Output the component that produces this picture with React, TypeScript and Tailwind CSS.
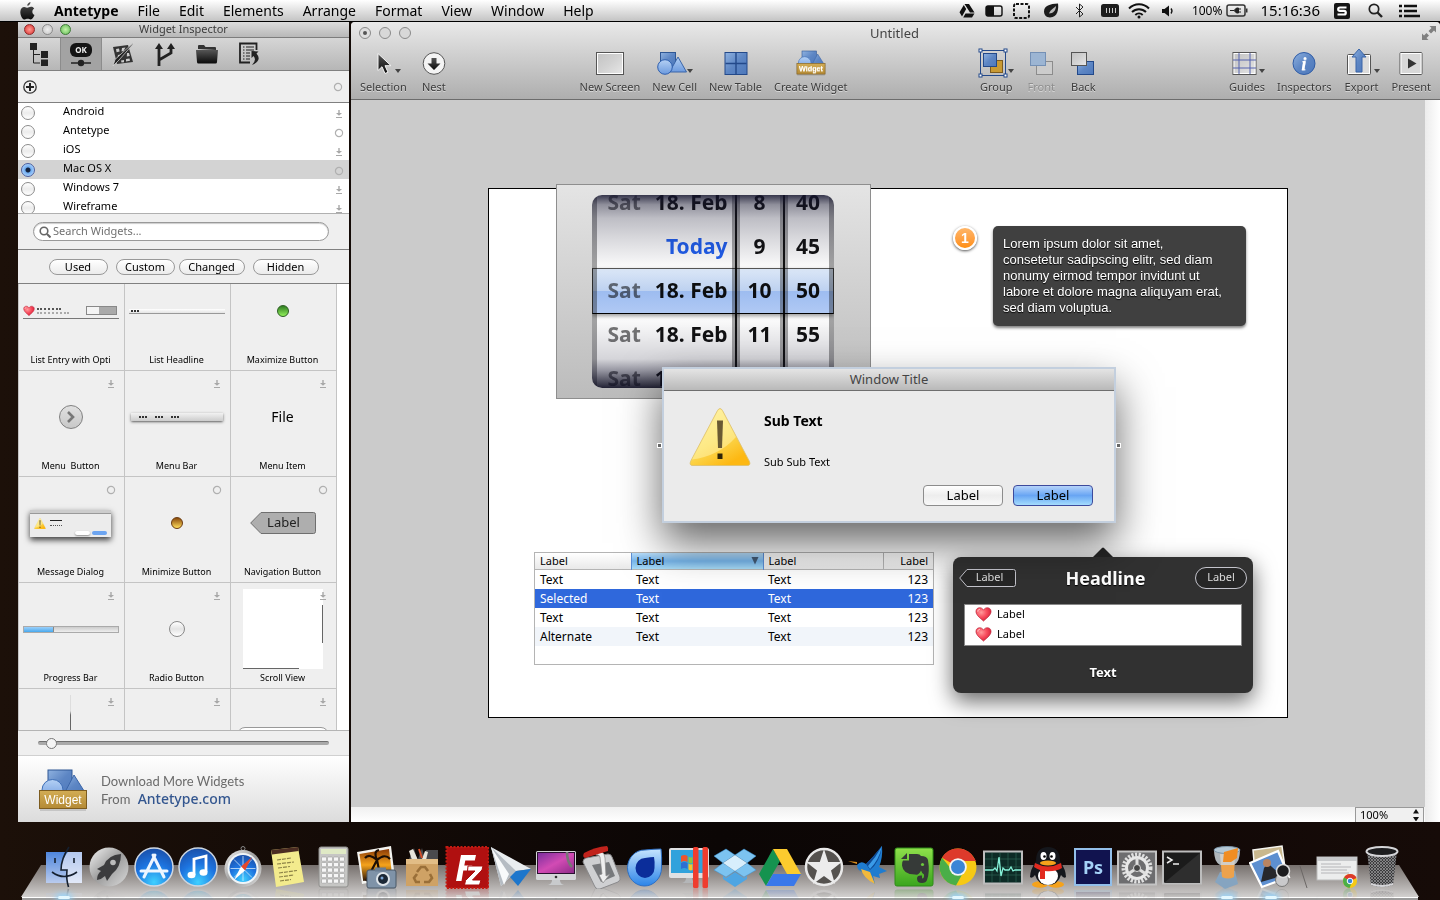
import React, { useState } from "react";

const menus = ["File", "Edit", "Elements", "Arrange", "Format", "View", "Window", "Help"];

const libraries = [
  { name: "Android", mark: "download" },
  { name: "Antetype", mark: "ring" },
  { name: "iOS", mark: "download" },
  { name: "Mac OS X", mark: "ring" },
  { name: "Windows 7", mark: "download" },
  { name: "Wireframe", mark: "download" },
];

const wheelRows = [
  { day: "Sat", date: "18. Feb", hour: "8", minute: "40" },
  { day: "", date: "Today", hour: "9", minute: "45" },
  { day: "Sat", date: "18. Feb", hour: "10", minute: "50" },
  { day: "Sat", date: "18. Feb", hour: "11", minute: "55" },
  { day: "Sat", date: "18. Feb", hour: "", minute: "" },
];

const tableRows = [
  { name: "Text", style: "" },
  { name: "Selected", style: "bg-[#2f68dc] text-white" },
  { name: "Text", style: "" },
  { name: "Alternate", style: "bg-[#f1f5fa]" },
];

/* ---------- shared drawings ---------- */

const Defs = () => (
  <svg width="0" height="0" className="absolute" aria-hidden="true">
    <defs>
      <linearGradient id="blue" x1="0" y1="0" x2="1" y2="1">
        <stop offset="0" stopColor="#8fb2e0" />
        <stop offset="0.5" stopColor="#5d86c4" />
        <stop offset="1" stopColor="#4d78bb" />
      </linearGradient>
      <linearGradient id="sky" x1="0" y1="0" x2="0" y2="1">
        <stop offset="0" stopColor="#b4d0f4" />
        <stop offset="1" stopColor="#6c9ade" />
      </linearGradient>
      <linearGradient id="gold" x1="0" y1="0" x2="0" y2="1">
        <stop offset="0" stopColor="#d3ad55" />
        <stop offset="1" stopColor="#b48a35" />
      </linearGradient>
      <linearGradient id="paper" x1="0" y1="0" x2="1" y2="1">
        <stop offset="0" stopColor="#c2c2c2" />
        <stop offset="0.5" stopColor="#d2d2d2" />
        <stop offset="1" stopColor="#e8e8e8" />
      </linearGradient>
      <linearGradient id="ink" x1="0" y1="0" x2="0" y2="1">
        <stop offset="0" stopColor="#555" />
        <stop offset="1" stopColor="#0a0a0a" />
      </linearGradient>
      <linearGradient id="steel" x1="0" y1="0" x2="1" y2="1">
        <stop offset="0" stopColor="#f4f4f4" />
        <stop offset="0.5" stopColor="#9c9c9c" />
        <stop offset="1" stopColor="#dcdcdc" />
      </linearGradient>
      <linearGradient id="warn" x1="0" y1="0" x2="0.6" y2="1">
        <stop offset="0" stopColor="#fff2a0" />
        <stop offset="0.6" stopColor="#fbdc58" />
        <stop offset="1" stopColor="#fdb813" />
      </linearGradient>
      <radialGradient id="heart" cx="0.35" cy="0.35" r="0.7">
        <stop offset="0" stopColor="#ff9a9c" />
        <stop offset="0.5" stopColor="#f85060" />
        <stop offset="1" stopColor="#d81f38" />
      </radialGradient>
      <radialGradient id="disc" cx="0.5" cy="0.9" r="0.9">
        <stop offset="0" stopColor="#3fd0ff" />
        <stop offset="0.55" stopColor="#1d74e0" />
        <stop offset="1" stopColor="#1a4fa8" />
      </radialGradient>
      <linearGradient id="finder" x1="0" y1="0" x2="0" y2="1">
        <stop offset="0" stopColor="#4f86dc" />
        <stop offset="1" stopColor="#b9cbee" />
      </linearGradient>
      <linearGradient id="finderLight" x1="0" y1="0" x2="0" y2="1">
        <stop offset="0" stopColor="#b4c8ee" />
        <stop offset="1" stopColor="#e2e9f8" />
      </linearGradient>
      <linearGradient id="sunset" x1="0" y1="0" x2="0" y2="1">
        <stop offset="0" stopColor="#8b3a06" />
        <stop offset="0.5" stopColor="#f5a31c" />
        <stop offset="1" stopColor="#2c1403" />
      </linearGradient>
      <linearGradient id="magenta" x1="0" y1="0" x2="1" y2="1">
        <stop offset="0" stopColor="#7c2f9e" />
        <stop offset="0.5" stopColor="#d24bb4" />
        <stop offset="1" stopColor="#8f2c8a" />
      </linearGradient>
      <linearGradient id="drop" x1="0" y1="0" x2="0" y2="1">
        <stop offset="0" stopColor="#c6e4ff" />
        <stop offset="1" stopColor="#2b84e8" />
      </linearGradient>
      <linearGradient id="leaf" x1="0" y1="0" x2="0" y2="1">
        <stop offset="0" stopColor="#8fe04b" />
        <stop offset="1" stopColor="#3aa51e" />
      </linearGradient>
      <pattern id="mesh" width="3" height="3" patternUnits="userSpaceOnUse">
        <rect width="3" height="3" fill="#3b3b3d" />
        <path d="M0 0L3 3M3 0L0 3" stroke="#9a9a9c" strokeWidth="0.7" />
      </pattern>
    </defs>
  </svg>
);

const Mark = ({ kind, className = "" }) =>
  kind === "ring" ? (
    <svg width="10" height="10" viewBox="0 0 10 10" className={className}>
      <circle cx="5" cy="5" r="3.600" fill="none" stroke="#b0b0b0" strokeWidth="1.200" />
    </svg>
  ) : (
    <svg width="10" height="10" viewBox="0 0 10 10" className={className}>
      <path d="M4.300 1h1.400v3H8L5 6.800 2 4h2.300zM2 8h6v1H2z" fill="#a8a8a8" />
    </svg>
  );

const Heart = ({ size }) => (
  <svg width={size} height={size} viewBox="0 0 18 18">
    <path
      d="M9 16C6.500 13.500 1 10 1 5.800 1 3 3 1.800 5 1.800c1.800 0 3.200 1 4 2.600.8-1.600 2.200-2.600 4-2.600 2 0 4 1.200 4 4C17 10 11.500 13.500 9 16z"
      fill="url(#heart)"
      stroke="#b8243a"
      strokeWidth="0.7"
    />
    <path d="M3 6c0-1.600.8-2.500 2.200-2.500" stroke="#ffd4d4" fill="none" />
  </svg>
);

const Warning = ({ className }) => (
  <svg viewBox="0 0 62 58" className={className}>
    <path
      d="M28.500 2.500q2.500-4 5 0l27 51q1.500 4-2.500 4H4q-4 0-2.500-4z"
      fill="url(#warn)"
      stroke="#dcbf6e"
      strokeWidth="0.8"
    />
    <path d="M29 3q2-3 4 0l14 26Q30 48 3 51.500z" fill="#fff6b4" opacity="0.5" />
    <path d="M28 12.500h6l-1 27.500h-4z" fill="#6a5a33" />
    <path d="M28.500 45.500h5v5.500h-5z" fill="#2f2408" />
  </svg>
);

const WidgetLogo = ({ size, id }) => (
  <svg width={size} height={size} viewBox="0 0 50 50">
    <rect x="10" y="5" width="24" height="24" fill="url(#blue)" stroke="#2f5794" />
    <path d="M36 10L48 29H26z" fill="url(#blue)" stroke="#3a65a8" />
    <circle cx="14.500" cy="25" r="10.500" fill="url(#sky)" stroke="#3f6fb6" />
    <rect x="1.500" y="25.500" width="47" height="18" fill="url(#gold)" stroke="#7d5c1f" />
    <text
      x="25"
      y="38.500"
      textAnchor="middle"
      fontFamily="Liberation Sans, sans-serif"
      fontSize="12"
      fontWeight={id === "bar" ? "bold" : "normal"}
      fill="#fff"
    >
      Widget
    </text>
    <path d="M2 45h46" stroke="#000" opacity="0.25" />
  </svg>
);

const Box = ({ children }) => (
  <svg width="30" height="30" viewBox="0 0 30 30">
    {children}
  </svg>
);

/* ---------- window tool bar ---------- */

const toolGroups = [
  [
    {
      label: "Selection",
      menu: true,
      icon: (
        <Box>
          <path d="M13 5.500v17l4-3.800 3 6.800 3-1.300-3-6.500h6z" fill="url(#ink)" stroke="#f4f4f4" />
        </Box>
      ),
    },
    {
      label: "Nest",
      icon: (
        <Box>
          <circle cx="15" cy="15.500" r="10.800" fill="#f4f4f4" stroke="#555" />
          <path d="M12.500 10h5v5.500h4L15 22l-6.500-6.500h4z" fill="url(#ink)" />
        </Box>
      ),
    },
  ],
  [
    {
      label: "New Screen",
      icon: (
        <Box>
          <rect x="1.500" y="4.500" width="27" height="22" fill="url(#paper)" stroke="#555" />
          <rect x="2.500" y="5.500" width="25" height="20" fill="none" stroke="#fff" />
        </Box>
      ),
    },
    {
      label: "New Cell",
      menu: true,
      icon: (
        <Box>
          <rect x="3.500" y="4.500" width="15" height="14" fill="url(#blue)" stroke="#2f5794" />
          <path d="M21 9l8.500 15h-17z" fill="url(#sky)" stroke="#3a65a8" />
          <circle cx="8" cy="19" r="7.300" fill="url(#sky)" stroke="#2f5fae" />
        </Box>
      ),
    },
    {
      label: "New Table",
      icon: (
        <Box>
          <rect x="4" y="4.500" width="22" height="22" fill="url(#blue)" stroke="#23498a" />
          <path d="M15 5v21M4.500 15.500h21" stroke="#23498a" strokeWidth="1.400" />
        </Box>
      ),
    },
    { label: "Create Widget", icon: <WidgetLogo size={30} id="bar" /> },
  ],
  [
    {
      label: "Group",
      menu: true,
      icon: (
        <Box>
          <rect x="2.500" y="2.500" width="25" height="25" fill="none" stroke="#23498a" />
          <rect x="12.500" y="12.500" width="12" height="12" fill="#c99a33" stroke="#7d5c1f" />
          <rect x="5.500" y="5.500" width="13" height="13" fill="url(#blue)" stroke="#23498a" />
          {[1, 26].map((x) =>
            [1, 26].map((y) => (
              <rect key={x + "-" + y} x={x} y={y} width="3" height="3" fill="#fff" stroke="#23498a" />
            ))
          )}
        </Box>
      ),
    },
    {
      label: "Front",
      disabled: true,
      icon: (
        <Box>
          <rect x="10.500" y="13.500" width="16" height="13" fill="#ccc" stroke="#8c8c8c" />
          <rect x="4.500" y="4.500" width="15" height="13" fill="#9cb5d3" stroke="#7490b5" />
        </Box>
      ),
    },
    {
      label: "Back",
      icon: (
        <Box>
          <rect x="9.500" y="13.500" width="16" height="13" fill="url(#blue)" stroke="#23498a" />
          <rect x="3.500" y="4.500" width="15" height="13" fill="url(#paper)" stroke="#555" />
        </Box>
      ),
    },
  ],
  [
    {
      label: "Guides",
      menu: true,
      icon: (
        <Box>
          <rect x="4" y="4.500" width="23" height="22" fill="url(#paper)" stroke="#555" />
          <rect x="5" y="5.500" width="21" height="20" fill="none" stroke="#fff" />
          <path d="M10 5v21M21 5v21M4 12h23M4 20h23" stroke="#5562ae" />
        </Box>
      ),
    },
    {
      label: "Inspectors",
      icon: (
        <Box>
          <circle cx="15" cy="15.500" r="11" fill="url(#blue)" stroke="#2f5ca6" />
          <text
            x="15"
            y="22"
            textAnchor="middle"
            fontFamily="Liberation Serif, serif"
            fontStyle="italic"
            fontWeight="bold"
            fontSize="19"
            fill="#fff"
          >
            i
          </text>
        </Box>
      ),
    },
    {
      label: "Export",
      menu: true,
      icon: (
        <Box>
          <rect x="3.500" y="6.500" width="23" height="20" rx="1" fill="#dcdcdc" stroke="#555" />
          <rect x="4.500" y="7.500" width="21" height="18" fill="none" stroke="#fff" />
          <path d="M15 1l7 8h-4v15h-6V9H8z" fill="url(#blue)" stroke="#3a65a8" />
        </Box>
      ),
    },
    {
      label: "Present",
      icon: (
        <Box>
          <rect x="4" y="4.500" width="22" height="22" rx="1" fill="#d8d8d8" stroke="#555" />
          <rect x="5" y="5.500" width="20" height="20" fill="none" stroke="#fff" />
          <path d="M12 10.500l8.500 5-8.500 5z" fill="#333" />
        </Box>
      ),
    },
  ],
];

const ToolButton = ({ tool }) => (
  <button
    className={`flex flex-col items-center text-[11px] leading-[18px] ${
      tool.disabled ? "text-[#8f8f8f]" : "text-[#3c3c3c]"
    } [text-shadow:0_1px_0_rgba(255,255,255,0.5)]`}
  >
    <span className="flex items-end">
      {tool.icon}
      {tool.menu && (
        <svg width="6" height="9" viewBox="0 0 6 9">
          <path d="M0 0h6L3 4z" fill="#444" />
        </svg>
      )}
    </span>
    <span>{tool.label}</span>
  </button>
);

/* ---------- menu bar ---------- */

const MenuBar = () => (
  <header className="flex h-[22px] shrink-0 items-center justify-between border-b border-black bg-linear-to-b from-white to-[#c4c4c4] pr-5 pl-5 text-sm text-black">
    <nav className="flex items-center gap-[19px]">
      <button aria-label="Apple">
        <svg width="15" height="18" viewBox="0 0 15 18">
          <path
            d="M10.500 0c.2 1.800-1.400 3.800-3.200 3.800C7 2.200 8.700.3 10.500 0zM14.500 13c-.8 2-2.200 4.500-3.800 4.500-1.200 0-1.600-.7-3-.7s-1.900.7-3 .7C2.500 17.500.3 13.500.3 9.900c0-3.300 2-5 4-5 1.300 0 2.400.8 3.200.8.800 0 2-.9 3.500-.9 1 0 2.400.4 3.200 1.700-2.700 1.700-2.300 5.500.3 6.500z"
            fill="url(#ink)"
          />
        </svg>
      </button>
      <button className="font-bold">Antetype</button>
      {menus.map((m) => (
        <button key={m}>{m}</button>
      ))}
    </nav>
    <div className="flex items-center gap-3">
      <svg width="16" height="14" viewBox="0 0 16 14">
        <path d="M5.500 0h4.500l5.500 8.500H11zM4.800 1l2.400 4L3 12.500.5 8.300zM6.500 9.500h9L13 13.500H4.200z" fill="#111" />
      </svg>
      <svg width="18" height="12" viewBox="0 0 18 12" className="-ml-0.5">
        <rect x="1" y="1" width="16" height="10" rx="2" fill="none" stroke="#111" strokeWidth="1.400" />
        <path d="M1 1h8v10H1z" fill="#111" />
      </svg>
      <svg width="18" height="16" viewBox="0 0 18 16" className="-ml-0.5">
        <rect x="1" y="1" width="15" height="14" rx="2" fill="none" stroke="#111" strokeWidth="2" strokeDasharray="3 1.500" />
      </svg>
      <svg width="16" height="15" viewBox="0 0 16 15">
        <path d="M15 .5c.8 5-.2 14-8 14C3 14.500 1 11.500 1 8.500c0-6 6-7.500 14-8z" fill="#1c1c1c" />
        <path d="M13 3c0 4-2.500 7.500-7 7.500C8 6 10 6 13 3z" fill="#bbb" />
      </svg>
      <svg width="10" height="15" viewBox="0 0 10 15" className="ml-1">
        <path d="M1 4l7 7-3.500 3V1L8 4l-7 7" fill="none" stroke="#222" />
      </svg>
      <svg width="19" height="13" viewBox="0 0 19 13" className="ml-1">
        <rect x="0" y="0" width="18" height="13" rx="2.500" fill="#1c1c1c" />
        <path d="M5.500 4v5M8.500 4v5M11.500 4v5M14.500 4v5" stroke="#ccc" />
      </svg>
      <svg width="22" height="16" viewBox="0 0 22 16" className="-ml-1">
        <path d="M1 5.500a14 14 0 0120 0M4 9a10 10 0 0114 0M7.300 12a5.500 5.500 0 017.400 0" fill="none" stroke="#111" strokeWidth="2" />
        <circle cx="11" cy="14" r="1.500" fill="#111" />
      </svg>
      <svg width="12" height="12" viewBox="0 0 12 12">
        <path d="M0 4h2.500L7 .5v11L2.500 8H0z" fill="#111" />
        <path d="M9 3.500q2 2.500 0 5" fill="none" stroke="#111" strokeWidth="1.300" />
      </svg>
      <span className="ml-1.5 flex items-center gap-1 text-xs">
        <span>100%</span>
        <svg width="22" height="13" viewBox="0 0 22 13">
          <rect x="1" y="1" width="18" height="11" rx="2" fill="none" stroke="#333" strokeWidth="1.500" />
          <path d="M20 4.500h1.500v4H20z" fill="#333" />
          <path d="M4 6.500h4M8 6.500l2.500-2.500h2v5h-2zM12 5h3M12 8h3" stroke="#222" fill="#222" />
        </svg>
      </span>
      <span className="mr-0.5 text-[15px]">15:16:36</span>
      <svg width="16" height="16" viewBox="0 0 16 16">
        <rect width="16" height="16" rx="2" fill="#161616" />
        <path d="M12.500 4.500H6q-1.800 0-1.800 1.700T6 7.900h4q1.800 0 1.800 1.800T10 11.500H3.500" fill="none" stroke="#fff" strokeWidth="2.200" />
      </svg>
      <svg width="15" height="15" viewBox="0 0 15 15" className="ml-1.5">
        <circle cx="6" cy="6" r="4.700" fill="none" stroke="#222" strokeWidth="1.700" />
        <path d="M9.500 9.500L14 14" stroke="#222" strokeWidth="2.400" />
      </svg>
      <svg width="21" height="14" viewBox="0 0 21 14" className="ml-1">
        <path d="M0 2h3M5 2h13M0 7h3M5 7h13M0 12h3M5 12h16" stroke="#111" strokeWidth="2.400" />
      </svg>
    </div>
  </header>
);

/* ---------- widget inspector ---------- */

const tabs = [
  {
    name: "Elements",
    icon: (
      <svg width="24" height="26" viewBox="0 0 24 26">
        <path d="M3 2h7v7H3zM14 10h7v7h-7zM14 18.500h7V25h-7z" fill="#222" />
        <path d="M6.500 9v13H13M6.500 13.500H13" stroke="#222" fill="none" />
      </svg>
    ),
  },
  {
    name: "Widgets",
    icon: (
      <svg width="24" height="26" viewBox="0 0 24 26">
        <rect x="1" y="2" width="22" height="14" rx="6" fill="#141414" />
        <text x="12" y="12" textAnchor="middle" fontFamily="Noto Sans, sans-serif" fontWeight="bold" fontSize="8" fill="#eee">
          OK
        </text>
        <path d="M2 22h20M9.500 22a2.500 2.500 0 005 0 2.500 2.500 0 00-5 0" stroke="#222" strokeWidth="1.400" fill="#222" />
      </svg>
    ),
  },
  {
    name: "Styles",
    icon: (
      <svg width="24" height="26" viewBox="0 0 24 26">
        <path d="M2 6l15-2 5 17-16 2z" fill="#333" />
        <path d="M5 8l3-.4.6 3-3 .6zM11 7l3.500-.4-2 3.400-2 .4zM7 14l2.500-.5-3 4zM16 12l2 .1.800 3-3 .5zM15 18l3.500-.4.5 2.200-4 .6zM10 19.500l3-.5v2.200l-2.500.3z" fill="#ccc" />
        <path d="M23 2L8 19l-6 6 2-6.500L21 3z" fill="#222" stroke="#ddd" strokeWidth="0.700" />
      </svg>
    ),
  },
  {
    name: "States",
    icon: (
      <svg width="24" height="26" viewBox="0 0 24 26">
        <path d="M6 25V6M6 19l12-7V6" stroke="#222" strokeWidth="2.800" fill="none" />
        <path d="M2 8l4-6 4 6zM14 8l4-6 4 6z" fill="#222" />
      </svg>
    ),
  },
  {
    name: "Assets",
    icon: (
      <svg width="24" height="26" viewBox="0 0 24 26">
        <path d="M3 8V5q0-1 1-1h5l1.500 2H20q1 0 1 1v2z" fill="#333" />
        <path d="M1 9h22l-1 12q0 1.500-1.500 1.500h-17Q2 22.500 2 21z" fill="url(#ink)" />
      </svg>
    ),
  },
  {
    name: "Notes",
    icon: (
      <svg width="24" height="26" viewBox="0 0 24 26">
        <path d="M19.500 9V2.500H3v19h10" fill="none" stroke="#222" strokeWidth="1.800" />
        <path d="M6 6h1.500M9 6h8M6 9h1.500M9 9h8M6 12h1.500M9 12h4M6 15h1.500M9 15h4M6 18h1.500M9 18h4" stroke="#222" />
        <path d="M14.500 10l7 .5-2 2q6 7-4.500 11.500 5-5 1.500-9l-2 2z" fill="#222" />
      </svg>
    ),
  },
];

const widgets = [
  {
    name: "List Entry with Opti",
    preview: (
      <div className="flex h-4 w-24 items-center border-b border-[#777]">
        <Heart size={12} />
        <div className="ml-0.5 flex flex-col gap-0.5">
          <div className="w-6 border-t-2 border-dotted border-[#555]"></div>
          <div className="w-8 border-t-2 border-dotted border-[#aaa]"></div>
        </div>
        <div className="mr-0.5 ml-auto flex h-[9px] w-[31px] border border-[#888] bg-[#aaa]">
          <div className="w-3 bg-[#f4f4f4]"></div>
        </div>
      </div>
    ),
  },
  {
    name: "List Headline",
    preview: (
      <div className="flex h-[5px] w-24 items-center border-b border-[#999] bg-linear-to-b from-white to-[#e4e4e4] pl-0.5">
        <div className="w-2 border-t-2 border-dotted border-[#333]"></div>
      </div>
    ),
  },
  {
    name: "Maximize Button",
    preview: (
      <div className="size-3 rounded-full border border-[#2b5d22] bg-linear-to-b from-[#2e7d22] to-[#93f25c]"></div>
    ),
  },
  {
    name: "Menu  Button",
    mark: "download",
    preview: (
      <div className="flex size-6 items-center justify-center rounded-full border border-[#808080] bg-linear-to-b from-[#e0e0e0] to-[#c8c8c8]">
        <svg width="10" height="12" viewBox="0 0 10 12">
          <path d="M2 1l5 5-5 5" fill="none" stroke="#777" strokeWidth="2.600" />
        </svg>
      </div>
    ),
  },
  {
    name: "Menu Bar",
    mark: "download",
    preview: (
      <div className="flex h-2 w-[92px] items-center gap-2 bg-linear-to-b from-[#f2f2f2] to-[#ccc] pl-2 shadow-sm shadow-black/50">
        <div className="w-2 border-t-2 border-dotted border-[#333]"></div>
        <div className="w-2 border-t-2 border-dotted border-[#333]"></div>
        <div className="w-2 border-t-2 border-dotted border-[#333]"></div>
      </div>
    ),
  },
  { name: "Menu Item", mark: "download", preview: <span className="text-sm">File</span> },
  {
    name: "Message Dialog",
    mark: "ring",
    preview: (
      <div className="flex h-[27px] w-[81px] flex-col bg-[#ececec] shadow-[0_3px_6px_rgba(0,0,0,0.75)]">
        <div className="h-1 border-b border-[#999] bg-[#ccc]"></div>
        <div className="flex flex-1 items-start gap-1 px-1 pt-1">
          <Warning className="h-[11px] w-3" />
          <div className="flex w-3 flex-col gap-1 pt-0.5">
            <div className="border-t border-[#222]"></div>
            <div className="border-t border-dotted border-[#555]"></div>
          </div>
          <div className="ml-auto flex gap-0.5 self-end pb-0.5">
            <div className="h-1 w-[15px] rounded-xs bg-white shadow-xs shadow-black/40"></div>
            <div className="h-1 w-[15px] rounded-xs bg-[#6da5f0]"></div>
          </div>
        </div>
      </div>
    ),
  },
  {
    name: "Minimize Button",
    mark: "ring",
    preview: (
      <div className="size-3 rounded-full border border-[#6b3a10] bg-linear-to-b from-[#8a4a08] to-[#ffdf5c]"></div>
    ),
  },
  {
    name: "Navigation Button",
    mark: "ring",
    preview: (
      <div className="relative flex h-[22px] w-[66px] items-center justify-center pl-0.5 text-[13px] text-[#222]">
        <svg viewBox="0 0 66 22" className="absolute inset-0">
          <path d="M.7 11L11 .5h52.500q2 0 2 2v17q0 2-2 2H11z" fill="#aeaeae" stroke="#6f6f6f" />
        </svg>
        <span className="relative">Label</span>
      </div>
    ),
  },
  {
    name: "Progress Bar",
    mark: "download",
    preview: (
      <div className="flex h-[7px] w-24 border border-[#aaa] bg-linear-to-b from-[#ccc] to-[#eee]">
        <div className="w-[30px] border-r border-[#888] bg-linear-to-b from-[#9bd0fa] to-[#46a9ee]"></div>
      </div>
    ),
  },
  {
    name: "Radio Button",
    mark: "download",
    preview: (
      <div className="size-4 rounded-full border border-[#8a8a8a] bg-linear-to-b from-white via-[#e4e4e4] to-white"></div>
    ),
  },
  {
    name: "Scroll View",
    mark: "download",
    preview: (
      <div className="flex h-20 w-20 flex-col justify-between bg-white">
        <div className="mt-4 h-[38px] w-px self-end bg-[#666]"></div>
        <div className="h-px w-14 bg-[#666]"></div>
      </div>
    ),
  },
];

// only the top of this row can be seen, its captions are below the edge
const nextRow = [
  <div className="h-20 w-px bg-linear-to-b from-[#ddd] from-20% to-[#666] to-25%"></div>,
  null,
  <div className="h-4 w-[92px] rounded-full border border-[#999] bg-white"></div>,
];

const WidgetInspector = () => {
  const [library, setLibrary] = useState("Mac OS X");

  return (
    <aside className="flex w-[331px] shrink-0 flex-col bg-[#efefef] text-[11px] text-black">
      <div className="flex h-4 shrink-0 items-center border-b border-[#7d7d7d] bg-linear-to-b from-[#dcdcdc] to-[#b8b8b8] pl-1.5">
        <div className="flex gap-[7px]">
          <button aria-label="Close" className="size-[11px] rounded-full border border-[#8c2a2a] bg-radial from-[#ff9a94] to-[#d8202a]"></button>
          <button aria-label="Minimize" className="size-[11px] rounded-full border border-[#8a8a8a] bg-radial from-[#eee] to-[#c4c4c4]"></button>
          <button aria-label="Zoom" className="size-[11px] rounded-full border border-[#3f7a38] bg-radial from-[#c2f5a8] to-[#5fb954]"></button>
        </div>
        <h2 className="flex-1 pr-[53px] text-center text-[#3c3c3c]">Widget Inspector</h2>
      </div>

      <div className="flex h-[33px] shrink-0 border-b border-[#808080] bg-linear-to-b from-[#d6d6d6] to-[#b6b6b6]">
        {tabs.map((tab, i) => (
          <button
            key={tab.name}
            aria-label={tab.name}
            className={`flex w-[42px] items-center justify-center ${
              i === 1 ? "border-x border-[#8c8c8c] bg-[#a3a3a3]" : ""
            }`}
          >
            {tab.icon}
          </button>
        ))}
      </div>

      <div className="flex h-8 shrink-0 items-center justify-between border-b border-[#808080] pr-1.5 pl-[5px]">
        <button aria-label="Add library">
          <svg width="14" height="14" viewBox="0 0 14 14">
            <circle cx="7" cy="7" r="6.200" fill="#eee" stroke="#333" strokeWidth="1.300" />
            <path d="M7 3v8M3 7h8" stroke="#222" strokeWidth="2" />
          </svg>
        </button>
        <Mark kind="ring" />
      </div>

      <div className="h-[111px] shrink-0 overflow-hidden border-b border-[#b0b0b0] bg-white">
        {libraries.map((lib) => (
          <label
            key={lib.name}
            className={`flex h-[19px] items-center pr-[5px] pl-[3px] ${
              library === lib.name ? "bg-[#d3d3d3]" : ""
            }`}
          >
            <input
              type="radio"
              name="library"
              checked={library === lib.name}
              onChange={() => setLibrary(lib.name)}
              className={`size-3.5 appearance-none rounded-full border ${
                library === lib.name
                  ? "border-[#4c5f9e] bg-[radial-gradient(circle,#14233f_2px,#6fabf0_3px,#b9dcff_7px)]"
                  : "border-[#8c8c8c] bg-linear-to-b from-white via-[#ececec] to-white"
              }`}
            />
            <span className="flex-1 pb-0.5 pl-7">{lib.name}</span>
            <Mark kind={lib.mark} className="mt-0.5" />
          </label>
        ))}
      </div>

      <div className="flex h-9 shrink-0 items-center border-b border-[#808080] pr-5 pl-[15px]">
        <label className="flex h-[19px] flex-1 items-center gap-0.5 rounded-full border border-[#999] bg-white pl-[5px] shadow-[inset_0_1px_1px_#ccc]">
          <svg width="12" height="12" viewBox="0 0 12 12">
            <circle cx="5" cy="5" r="3.800" fill="none" stroke="#666" strokeWidth="1.600" />
            <path d="M8 8l3.500 3.500" stroke="#666" strokeWidth="2" />
          </svg>
          <input
            type="search"
            aria-label="Search Widgets"
            placeholder="Search Widgets..."
            className="min-w-0 flex-1 bg-transparent outline-none placeholder:text-[#707070]"
          />
        </label>
      </div>

      <div className="flex h-[34px] shrink-0 items-center justify-center gap-2 border-b border-[#808080]">
        {["Used", "Custom", "Changed", "Hidden"].map((f, i) => (
          <button
            key={f}
            className={`h-4 rounded-full border border-[#999] bg-linear-to-b from-white to-[#ebebeb] leading-3 ${
              i < 2 ? "w-[59px]" : "w-[66px]"
            } ${i === 1 ? "-mr-1" : ""}`}
          >
            {f}
          </button>
        ))}
      </div>

      <div className="min-h-0 flex-1 overflow-hidden border-b border-[#b4b4b4] bg-white">
        {/* scrolled a little, so the first row starts above the edge */}
        <div className="-mt-[19px] grid w-[319px] grid-cols-3 border-l border-[#c4c4c4]">
          {widgets.map((w) => (
            <div
              key={w.name}
              className="relative flex h-[106px] flex-col border-r border-b border-[#c4c4c4] bg-[#efefef] pr-0.5"
            >
              {w.mark && <Mark kind={w.mark} className="absolute top-2 right-2" />}
              <div className="flex h-[92px] shrink-0 items-center justify-center">{w.preview}</div>
              <div className="-mt-[3px] text-center text-[9px] leading-3 whitespace-pre">{w.name}</div>
            </div>
          ))}
          {nextRow.map((preview, i) => (
            <div key={i} className="relative flex h-[106px] flex-col border-r border-[#c4c4c4] bg-[#efefef] pr-0.5">
              <Mark kind="download" className="absolute top-2 right-2" />
              <div className="flex h-[92px] shrink-0 items-center justify-center">{preview}</div>
            </div>
          ))}
        </div>
      </div>

      <div className="flex h-[25px] shrink-0 items-center border-b border-[#d0d0d0] px-5">
        <input
          type="range"
          aria-label="Preview size"
          defaultValue={3}
          className="h-1 w-full appearance-none rounded-full border-t border-[#6f6f6f] bg-[#a9a9a9] [&::-webkit-slider-thumb]:size-[11px] [&::-webkit-slider-thumb]:appearance-none [&::-webkit-slider-thumb]:rounded-full [&::-webkit-slider-thumb]:border [&::-webkit-slider-thumb]:border-[#777] [&::-webkit-slider-thumb]:bg-[#f4f4f4]"
        />
      </div>

      <footer className="flex h-[66px] shrink-0 items-center gap-[13px] bg-linear-to-b from-white to-[#dcdcdc] pt-0.5 pl-5">
        <WidgetLogo size={50} id="footer" />
        <p className="font-[Lato,sans-serif] text-[13px] leading-[17px] text-[#6b6b6b]">
          Download More Widgets
          <br />
          From{" "}
          <a href="#antetype" className="ml-1 font-['Noto_Sans',sans-serif] text-sm leading-[17px] font-medium text-[#33568f]">
            Antetype.com
          </a>
        </p>
      </footer>
    </aside>
  );
};

/* ---------- artboard content ---------- */

const WheelDivider = () => <div className="w-2 shrink-0 border-x-3 border-[#a9a9a9] bg-[#111]"></div>;

const DatePicker = () => (
  <div className="flex h-[215px] w-[315px] items-center justify-center border border-[#8e8e8e] bg-linear-to-b from-[#e4e4e4] to-[#bcbcbc] pr-0.5">
    <div className="relative h-[193px] w-[242px] overflow-hidden rounded-[10px] bg-white">
      <div className="flex h-full border-x-5 border-[#a5a5a5] text-[21px] font-bold text-[#111]">
        <div className="flex flex-1 flex-col justify-center">
          {wheelRows.map((r, i) => (
            <div
              key={i}
              className={`flex h-11 shrink-0 items-center justify-end gap-3.5 pr-1 ${
                r.day ? "" : "text-[#205ff0]"
              }`}
            >
              <span className="text-[#777]">{r.day}</span>
              <span>{r.date}</span>
            </div>
          ))}
        </div>
        <WheelDivider />
        <div className="flex w-10 flex-col justify-center">
          {wheelRows.map((r, i) => (
            <div key={i} className="flex h-11 shrink-0 items-center justify-center">
              {r.hour}
            </div>
          ))}
        </div>
        <WheelDivider />
        <div className="flex w-[41px] flex-col justify-center">
          {wheelRows.map((r, i) => (
            <div key={i} className="flex h-11 shrink-0 items-center justify-center">
              {r.minute}
            </div>
          ))}
        </div>
      </div>
      <div className="absolute inset-0 bg-[linear-gradient(rgba(20,20,45,0.85),rgba(20,20,45,0.48)_5%,rgba(20,20,45,0.28)_12%,rgba(20,20,45,0.17)_22%,rgba(20,20,45,0.03)_36%,transparent_40%,transparent_62%,rgba(20,20,45,0.06)_70%,rgba(20,20,45,0.18)_85%,rgba(20,20,45,0.45)_91%,rgba(10,10,30,0.9))]"></div>
      <div className="absolute inset-x-0 top-[73px] h-[46px] border border-t-[#555] border-r-[#444] border-b-black border-l-[#444] bg-[linear-gradient(#dbe7f7,#bdd1f0_50%,#9dbcf0_50%,#b0c9f4)] mix-blend-multiply shadow-[0_2px_4px_rgba(0,0,0,0.4)]"></div>
    </div>
  </div>
);

const Dialog = () => (
  <div className="relative border-2 border-[#c3cfde] bg-[#ebebeb] shadow-[0_20px_40px_rgba(0,0,0,0.6)]">
    <div className="absolute top-[74px] -left-[7px] size-[5px] border border-white bg-[#666]"></div>
    <div className="absolute top-[74px] -right-[7px] size-[5px] border border-white bg-[#666]"></div>
    <div className="h-[22px] border-b border-[#6e6e6e] bg-linear-to-b from-[#e4e4e4] to-[#b9b9b9] text-center text-[13px] leading-5 text-[#444]">
      Window Title
    </div>
    <div className="flex gap-[13px] pt-[17px] pl-[25px]">
      <Warning className="h-[58px] w-[62px]" />
      <div className="pt-[3px]">
        <h3 className="text-sm leading-5 font-bold">Sub Text</h3>
        <p className="mt-[23px] text-[11px] leading-4">Sub Sub Text</p>
      </div>
    </div>
    <div className="flex justify-end gap-2.5 pt-[15px] pr-[21px] pb-[15px]">
      <button className="h-[21px] w-20 rounded-sm border border-[#8c8c8c] bg-linear-to-b from-white via-[#ededed] to-[#f8f8f8] text-[13px] leading-4">
        Label
      </button>
      <button className="h-[21px] w-20 rounded-sm border border-[#3d4a9c] bg-linear-to-b from-[#b5d3fa] via-[#68a5f3] to-[#a5dcfd] text-[13px] leading-4">
        Label
      </button>
    </div>
  </div>
);

const DataTable = () => (
  <div className="h-[113px] w-[400px] border border-[#b4b4b4] bg-white">
    <table className="w-full table-fixed border-collapse text-xs">
      <thead>
        <tr className="border-b border-[#b4b4b4] bg-linear-to-b from-white to-[#e9e9e9] text-left text-[11px] leading-4">
          <th className="w-[96px] pl-[5px] font-normal">Label</th>
          <th className="w-[132px] border-x border-[#5c8fd6] bg-linear-to-b from-[#b9defa] via-[#77b6ec] to-[#a9dcf7] pl-[5px] font-normal">
            <span className="flex items-center justify-between pr-1">
              Label
              <svg width="8" height="8" viewBox="0 0 8 8">
                <path d="M.5 0h7L4 7.500z" fill="#425a75" />
              </svg>
            </span>
          </th>
          <th className="w-[120px] border-r border-[#b4b4b4] pl-[5px] font-normal">Label</th>
          <th className="pr-[5px] text-right font-normal">Label</th>
        </tr>
      </thead>
      <tbody className="leading-[19px]">
        {tableRows.map((r, i) => (
          <tr key={i} className={r.style}>
            <td className="pl-[5px]">{r.name}</td>
            <td className="pl-[5px]">Text</td>
            <td className="pl-[5px]">Text</td>
            <td className="pr-[5px] text-right">123</td>
          </tr>
        ))}
      </tbody>
    </table>
  </div>
);

const Popover = () => (
  <div className="relative w-[300px] rounded-lg bg-[#313131] pb-[11px] text-white shadow-[0_8px_22px_rgba(0,0,0,0.6)]">
    <svg width="20" height="10" viewBox="0 0 20 10" className="absolute -top-2.5 left-[140px]">
      <path d="M0 10L9 1q1-1 2 0l9 9z" fill="#262626" />
    </svg>
    <div className="flex h-[42px] items-center justify-between px-1.5">
      <button className="relative flex h-[18px] w-[57px] items-center justify-center pl-1 text-[11px] text-[#ddd]">
        <svg viewBox="0 0 57 18" className="absolute inset-0">
          <path d="M.7 9L8 .5h46.500q2 0 2 2v13q0 2-2 2H8z" fill="#262626" stroke="#c4c4cc" />
        </svg>
        <span className="relative">Label</span>
      </button>
      <h3 className="text-lg font-bold [text-shadow:0_1px_1px_black]">Headline</h3>
      <button className="h-[22px] w-[52px] rounded-full border border-[#c4c4cc] bg-[#262626] text-[11px] text-[#ddd]">
        Label
      </button>
    </div>
    <ul className="mx-[11px] mt-[5px] border border-[#888] bg-white text-[11px] text-black">
      {[1, 2].map((n) => (
        <li key={n} className="flex h-5 items-center gap-[5px] pl-2.5">
          <Heart size={17} />
          Label
        </li>
      ))}
    </ul>
    <p className="mt-4 text-center text-[13px] leading-5 font-bold [text-shadow:0_1px_1px_black]">Text</p>
  </div>
);

const Artboard = () => (
  <div className="relative h-[530px] w-[800px] shrink-0 border border-black bg-white text-black">
    <div className="absolute -top-[5px] left-[67px]">
      <DatePicker />
    </div>
    <div className="absolute top-[37px] left-[464px] flex items-start gap-4">
      <span className="flex size-6 items-center justify-center rounded-full border-2 border-white bg-linear-to-b from-[#ffb566] to-[#ff8f0a] font-['Liberation_Sans',sans-serif] text-sm font-bold text-white shadow-[0_1px_3px_rgba(0,0,0,0.7)]">
        1
      </span>
      <p className="w-[253px] rounded-[5px] bg-[#404040] py-2.5 pr-[22px] pl-2.5 font-['Liberation_Sans',sans-serif] text-[13px] leading-4 text-white shadow-[0_2px_3px_rgba(0,0,0,0.5)] [text-shadow:0_1px_1px_black]">
        Lorem ipsum dolor sit amet, consetetur sadipscing elitr, sed diam nonumy eirmod tempor invidunt ut
        labore et dolore magna aliquyam erat, sed diam voluptua.
      </p>
    </div>
    <div className="absolute top-[363px] left-[45px]">
      <DataTable />
    </div>
    <div className="absolute top-[368px] left-[464px]">
      <Popover />
    </div>
    <div className="absolute top-[178px] left-[173px] w-[454px]">
      <Dialog />
    </div>
  </div>
);

const DocumentWindow = () => (
  <main className="flex min-w-0 flex-1 flex-col overflow-hidden rounded-t-sm bg-[#cbcbcb]">
    <div className="shrink-0 border-b border-[#6c6c6c] bg-linear-to-b from-[#e9e9e9] to-[#aeaeae]">
      <div className="flex h-[22px] items-center justify-between pr-1 pl-2">
        <div className="flex gap-2">
          <button aria-label="Close" className="flex size-3 items-center justify-center rounded-full border border-[#8a8a8a] bg-[#dedede]">
            <span className="size-1 rounded-full bg-[#555]"></span>
          </button>
          <button aria-label="Minimize" className="size-3 rounded-full border border-[#8a8a8a] bg-[#d8d8d8]"></button>
          <button aria-label="Zoom" className="size-3 rounded-full border border-[#8a8a8a] bg-[#d8d8d8]"></button>
        </div>
        <h1 className="pr-11 text-[13px] leading-5 text-[#444]">Untitled</h1>
        <button aria-label="Full screen">
          <svg width="14" height="14" viewBox="0 0 14 14">
            <path d="M7.500 0H14v6.500l-2-2L9 7.500 6.500 5l3-3zM6.500 14H0V7.500l2 2L4.500 7 7 9.500l-2.500 2.500z" fill="#808080" />
          </svg>
        </button>
      </div>
      <div className="flex h-[55px] items-start justify-between px-[9px] pt-1">
        {toolGroups.map((group, i) => (
          <div key={i} className="flex gap-3">
            {group.map((tool) => (
              <ToolButton key={tool.label} tool={tool} />
            ))}
          </div>
        ))}
      </div>
    </div>

    <div className="flex min-h-0 flex-1">
      <div className="flex min-w-0 flex-1 flex-col">
        <section className="flex min-h-0 flex-1 items-center justify-center overflow-hidden pb-0.5">
          <Artboard />
        </section>
        <div className="flex h-[15px] shrink-0 justify-end bg-linear-to-b from-[#f0f0f0] to-white pr-px">
          <div className="relative w-[69px] border border-b-0 border-[#999] bg-[#f0f0f0]">
            <select
              aria-label="Zoom"
              className="block h-3.5 w-full appearance-none pl-1 text-[11px] leading-[14px] text-black"
            >
              <option>100%</option>
              <option>200%</option>
            </select>
            <svg width="6" height="12" viewBox="0 0 6 12" className="pointer-events-none absolute top-px right-1">
              <path d="M0 4.500L3 0l3 4.500zM0 8l3 4.500L6 8z" fill="#111" />
            </svg>
          </div>
        </div>
      </div>
      <div className="w-[15px] shrink-0 bg-linear-to-r from-[#ececec] to-white"></div>
    </div>
  </main>
);

/* ---------- dock ---------- */

const dockApps = [
  {
    name: "Finder",
    running: true,
    art: (
      <>
        <rect x="4" y="7" width="36" height="31" fill="url(#finder)" />
        <path d="M26 7h14v31H25q-1-6-.5-13h-6Q19 15 26 7z" fill="url(#finderLight)" />
        <path d="M27 2q-8 12-8 23h6q-1 9 1.500 17M13 13v5M32 13v5M10 27q12 9 25 0" fill="none" stroke="#15202f" strokeWidth="1.600" />
      </>
    ),
  },
  {
    name: "Launchpad",
    art: (
      <>
        <circle cx="22" cy="22" r="19.500" fill="url(#steel)" />
        <path d="M34 9q-13 1-17 11l-7 4 4 2q-4 3-4 9 5-1 8-4l2 5 5-7q9-7 9-20z" fill="#3c3c3e" />
        <circle cx="26" cy="17.500" r="2.800" fill="#bbb" />
      </>
    ),
  },
  {
    name: "App Store",
    art: (
      <>
        <circle cx="22" cy="22" r="19" fill="url(#disc)" stroke="#cfd8e4" strokeWidth="1.500" />
        <path d="M23 10L12 32M21 10l11 22M9 26h26" fill="none" stroke="#eef6ff" strokeWidth="3" strokeLinecap="round" />
      </>
    ),
  },
  {
    name: "iTunes",
    art: (
      <>
        <circle cx="22" cy="22" r="19" fill="url(#disc)" stroke="#ccd6e0" strokeWidth="1.500" />
        <path d="M18 30V14l12-3v16" fill="none" stroke="#fff" strokeWidth="2.800" />
        <ellipse cx="15.500" cy="30" rx="4" ry="3.200" fill="#fff" />
        <ellipse cx="27.500" cy="27.500" rx="4" ry="3.200" fill="#fff" />
      </>
    ),
  },
  {
    name: "Safari",
    art: (
      <>
        <circle cx="22" cy="3.500" r="2" fill="none" stroke="#888" />
        <circle cx="22" cy="23.500" r="18.500" fill="url(#steel)" />
        <circle cx="22" cy="23.500" r="15.500" fill="#f0f5f8" />
        <circle cx="22" cy="23.500" r="13.500" fill="url(#disc)" />
        <path d="M22 11v25M9.500 23.500h25M13 14.500l18 18M31 14.500l-18 18" stroke="#cfe6fa" strokeWidth="0.800" />
        <path d="M31 12l-7 13.500-4-4z" fill="#e5482c" />
        <path d="M13 35l7-13.500 4 4z" fill="#fff" />
      </>
    ),
  },
  {
    name: "Stickies",
    art: (
      <>
        <path d="M5 5l27-3 6 35-28 5z" fill="#f3eb8d" />
        <path d="M5 5l27-3 .7 4L6 9.500z" fill="#4b2c22" />
        <path d="M11 15l14-2M11 19l17-2M12 23l12-1.500M13 28l18-2.500M13 32l15-2M14 36l11-1.500" stroke="#8e8448" strokeWidth="1.200" strokeDasharray="4 1" />
      </>
    ),
  },
  {
    name: "Calculator",
    art: (
      <>
        <rect x="8" y="2" width="29" height="40" rx="2" fill="#c6c6c4" stroke="#8e8e8c" />
        <rect x="10" y="4" width="25" height="5" fill="#dfe9c5" />
        {[12, 17.5, 23, 28.5, 34].map((y) =>
          [10.5, 16.5, 22.5, 28.5].map((x) => (
            <rect key={x + "-" + y} x={x} y={y} width="5" height="4.200" rx="0.800" fill="#f6f6f6" stroke="#9a9a9a" strokeWidth="0.600" />
          ))
        )}
      </>
    ),
  },
  {
    name: "iPhoto",
    art: (
      <>
        <path d="M2 7l34-6 4 32-33 6z" fill="#f4f4f0" />
        <path d="M4.500 9l29.500-5 3.200 27-29 5z" fill="url(#sunset)" />
        <path d="M22 15L11 36M22 15l4 20M22 15q-8-7-12-2M22 15q-4-9 2-10M22 15q8-7 13-1" fill="none" stroke="#1c0e04" strokeWidth="2.200" />
        <rect x="12" y="25" width="29" height="18" rx="2" fill="#7f93a8" stroke="#4b5866" />
        <rect x="20" y="22.500" width="11" height="4" fill="#6a7d92" />
        <circle cx="28" cy="34" r="7" fill="#dfe5ea" />
        <circle cx="28" cy="34" r="5" fill="#1c2836" />
        <circle cx="27" cy="33" r="1.500" fill="#7ba4d4" />
      </>
    ),
  },
  {
    name: "App Bag",
    art: (
      <>
        <path d="M9 14L14 3l3 11zM18 14l4-11 3 11zM26 5h12v9H26z" fill="#4a4a4d" />
        <path d="M12 15l-3-9 4-2 5 11zM22 14l3-8 3 1-2 8z" fill="#e7e4da" />
        <path d="M19 4l3 9" stroke="#d4502a" strokeWidth="2" />
        <path d="M6 14h32v27H6z" fill="#cfa265" />
        <path d="M6 14h32v5H6z" fill="#e2bd86" />
        <path d="M17 27l4-5h4l3 4M30 29l2 4-3 4h-5M20 37h-4l-2-4 3-4" fill="none" stroke="#9a6f38" strokeWidth="2.600" />
      </>
    ),
  },
  {
    name: "FileZilla",
    art: (
      <>
        <rect x="1.500" y="2" width="42" height="41" fill="#b01010" stroke="#c31b12" strokeWidth="2" strokeDasharray="2 1.500" />
        <path d="M11 36l5-26h15l-1.200 5.500h-9.500l-1 5h8l-1 5h-8L16.500 36z" fill="#fff" />
        <path d="M23 21h15l-1 4-9.500 10H36l-1.500 5H19.500l1-4.500L30 26h-7.500z" fill="#fff" stroke="#a80d0d" />
      </>
    ),
  },
  {
    name: "Sparrow",
    art: (
      <>
        <path d="M2 2l40 22-15 2-15 15z" fill="#e9edf0" />
        <path d="M2 2l25 24-15 15z" fill="#b5bcc3" />
        <path d="M27 26l15-2-13 17-8-9z" fill="#1d76cc" />
        <path d="M2 2l18 27-5 11z" fill="#f8fafb" />
      </>
    ),
  },
  {
    name: "CleanMyMac",
    art: (
      <>
        <rect x="2" y="6" width="40" height="29" rx="1.500" fill="#d4d6d8" />
        <rect x="3" y="7" width="38" height="22" fill="#2a1030" />
        <rect x="4" y="8" width="36" height="20" fill="url(#magenta)" />
        <path d="M33 7q0 10 5 15" fill="none" stroke="#777" strokeWidth="2.600" />
        <path d="M14 40q4-1 4-5h8q0 4 4 5z" fill="#c8cacc" />
        <circle cx="22" cy="32" r="1.300" fill="#333" />
      </>
    ),
  },
  {
    name: "Transmission",
    art: (
      <>
        <path d="M4 17q0-3 3-4l22-4q3 0 4 3l8 20q1 3-2 5l-18 7q-3 1-5-2z" fill="#cfd0d2" stroke="#8a8a8c" />
        <path d="M13 20l17-3 6 14-14 6z" fill="#77797c" />
        <path d="M17 8q8-4 9 5l1 18 4-2-7 9-4-8 3-1-2-17q-1-3-4-2z" fill="#efefef" stroke="#888" strokeWidth="0.700" />
        <path d="M5 8Q3 12 6 13L29 6q1-3-1-5-12 1-23 7z" fill="#c1231c" />
      </>
    ),
  },
  {
    name: "Drop",
    art: (
      <>
        <path d="M22 5Q32 4 38 4q1 8 0.500 19a17 18 0 11-16.500-18z" fill="url(#drop)" stroke="#2d6fc4" />
        <path d="M22 13q6-1 9-1 1 5 0.500 11a9.500 10 0 11-9.500-10z" fill="#0b2d9a" />
      </>
    ),
  },
  {
    name: "Parallels",
    art: (
      <>
        <rect x="1" y="3" width="40" height="30" rx="2" fill="#dfe1e3" />
        <rect x="3" y="5" width="36" height="23" fill="#30a2dc" />
        <path d="M13 11q3.500-2 6.500 0v6q-3-2-6.500 0z" fill="#f0542c" />
        <path d="M20.500 11.500q2 1.500 4 0.500v6q-2 1-4-.5z" fill="#8cc63e" />
        <path d="M13 18q3.500-2 6.500 0v6q-3-2-6.500 0z" fill="#2e6fd2" />
        <path d="M20.500 18.500q2 1.500 4 .5v6q-2 1-4-.5z" fill="#f7c52c" />
        <path d="M14 38q4-1 4-5h6q0 4 4 5z" fill="#b4b6b8" />
        <rect x="25" y="2" width="5.500" height="41" rx="1.500" fill="#ef3d2e" />
        <rect x="34.500" y="2" width="5.500" height="41" rx="1.500" fill="#ef3d2e" />
      </>
    ),
  },
  {
    name: "Dropbox",
    art: (
      <>
        <path d="M13 4l9 6-12 8-9-7zM31 4l-9 6 12 8 9-7zM10 18l12 8-9 6-12-7zM34 18l-12 8 9 6 12-7z" fill="#7cc3f0" stroke="#3b94d8" strokeWidth="0.500" />
        <path d="M22 10l12 8-12 8-12-8z" fill="#d7eefc" />
        <path d="M22 27l9 6 3-2v3l-12 8-12-8v-3l3 2z" fill="#4fa5e2" />
      </>
    ),
  },
  {
    name: "Google Drive",
    art: (
      <>
        <path d="M15 4L1 29l7 12 14-25z" fill="#15934f" />
        <path d="M15 4h14l14 25H29z" fill="#fccb2e" />
        <path d="M15 29h28l-7 12H8z" fill="#3a78ea" />
      </>
    ),
  },
  {
    name: "Star",
    art: (
      <>
        <circle cx="22" cy="22" r="18" fill="#55524f" stroke="#e9e9e9" strokeWidth="2.500" />
        <path d="M22 4l4.200 13h13.600L29 25.500 33 39l-11-8-11 8 4-13.500L4.200 17h13.600z" fill="#ececec" />
      </>
    ),
  },
  {
    name: "Bird",
    art: (
      <>
        <path d="M35 1q1 12-3 21l8 4-8 3 1 4-7-2 2 8q-8-5-10-12-8 0-8-7 4-5 9-1 8-8 16-18z" fill="#1f7cd0" />
        <path d="M35 1Q27 11 19 19l4 6q10-8 12-24z" fill="#0f4b97" />
        <path d="M35 1q-6 11-14 20l2 3q9-9 12-23z" fill="#3a9be8" />
        <path d="M10 17l-9-1 9 3z" fill="#d98d1d" />
        <path d="M14 24q2 9 14 15l-5-12z" fill="#f2b93c" />
      </>
    ),
  },
  {
    name: "Evernote",
    art: (
      <>
        <rect x="3" y="3" width="38" height="38" rx="2" fill="url(#leaf)" stroke="#2e8c18" />
        <path d="M17 9h8q3 0 4 2 6 0 7 4 2 12-1 20-1 3-5 3-5 0-5-4.500 0-3.500 5-3v3q2.500 0 2-4-2-1-3-4-2 5-6 4-12 0-13-9 0-4 1-5h6z" fill="#363a38" />
        <path d="M15 8v6H9z" fill="#363a38" />
        <circle cx="30.500" cy="19.500" r="1.600" fill="#6cc83d" />
      </>
    ),
  },
  {
    name: "Chrome",
    running: true,
    art: (
      <>
        <circle cx="22" cy="22" r="18.500" fill="#f6c915" />
        <path d="M22 22L6 12.700A18.500 18.500 0 0138.500 13.500L40 16H22z" fill="#dd3a2b" />
        <path d="M6 12.700A18.500 18.500 0 0020 40.400L28 26l-12-1z" fill="#4aae48" />
        <circle cx="22" cy="22" r="8.800" fill="#f4f4f4" />
        <circle cx="22" cy="22" r="7" fill="#3b85d6" />
      </>
    ),
  },
  {
    name: "Activity Monitor",
    art: (
      <>
        <rect x="3" y="6.500" width="38" height="32" fill="#0d2b26" stroke="#bdbdbd" strokeWidth="2" />
        <path d="M4 14h36M4 22h36M4 30h36M11 8v29M19 8v29M27 8v29M35 8v29" stroke="#2b6354" strokeWidth="0.700" />
        <path d="M4 25h8l2-2 2 3 2-14 2 19 2-8 2 2h4l2-3 2 4 2-1h6" fill="none" stroke="#86f2d9" strokeWidth="1.300" />
      </>
    ),
  },
  {
    name: "QQ",
    art: (
      <>
        <ellipse cx="14" cy="39.500" rx="8" ry="3.200" fill="#f5a21b" />
        <ellipse cx="30" cy="39.500" rx="8" ry="3.200" fill="#f5a21b" />
        <path d="M22 2q12 0 12 14 6 9 6 16-2 2-5-2-3 10-13 10T9 30q-3 4-5 2 0-7 6-16Q10 2 22 2z" fill="#15171c" />
        <ellipse cx="22" cy="31" rx="10" ry="9" fill="#fff" />
        <path d="M9 18q13 7 26 0l1 5q-7 4-17 3v8h-5v-9q-3-1-6-3z" fill="#e12a1f" />
        <ellipse cx="17.500" cy="11" rx="3" ry="4" fill="#fff" />
        <ellipse cx="26.500" cy="11" rx="3" ry="4" fill="#fff" />
        <circle cx="18.500" cy="11.500" r="1.300" />
        <circle cx="25.500" cy="11.500" r="1.300" />
        <ellipse cx="22" cy="18" rx="8" ry="2.600" fill="#f5a21b" />
      </>
    ),
  },
  {
    name: "Photoshop",
    art: (
      <>
        <rect x="4" y="4" width="36" height="36" fill="#11134f" stroke="#93bfea" strokeWidth="2" />
        <text x="22" y="29" textAnchor="middle" fontFamily="Noto Sans, sans-serif" fontWeight="bold" fontSize="18" fill="#a4d1f7">
          Ps
        </text>
      </>
    ),
  },
  {
    name: "System Preferences",
    art: (
      <>
        <rect x="3" y="6.500" width="38" height="33" fill="#6d6d6f" stroke="#c4c4c4" strokeWidth="2" />
        <circle cx="22" cy="23" r="13.500" fill="none" stroke="#e0e0e0" strokeWidth="4" strokeDasharray="2.200 1.400" />
        <circle cx="22" cy="23" r="10.500" fill="none" stroke="#e8e8e8" strokeWidth="3" />
        <path d="M22 23V13M22 23l9 6M22 23l-9 6" stroke="#e0e0e0" strokeWidth="3" />
        <circle cx="22" cy="23" r="3.500" fill="#444" stroke="#ddd" />
      </>
    ),
  },
  {
    name: "Terminal",
    art: (
      <>
        <rect x="3" y="6.500" width="38" height="32" fill="#1b1b1b" stroke="#bdbdbd" strokeWidth="2" />
        <path d="M4 38L40 8v30z" fill="#2e2e2e" />
        <path d="M7 12l5 3-5 3M13 19h6" fill="none" stroke="#eee" strokeWidth="1.500" />
      </>
    ),
  },
  {
    name: "Antetype",
    running: true,
    art: (
      <>
        <path d="M15 27l-5 10 10 7 13-5-3-13z" fill="#85a4c0" />
        <path d="M15 9h15l-1 23q-6 3-12 0z" fill="#eda24c" />
        <path d="M9 5q0 12 6 15h14q6-3 6-15z" fill="#ccd6dc" opacity="0.850" />
        <ellipse cx="22" cy="5" rx="13" ry="3.500" fill="#b5c9d6" stroke="#7f98ab" />
        <path d="M19 7l14-4-1 10-6 4h-8z" fill="#f08d22" />
      </>
    ),
  },
  {
    name: "Preview",
    running: true,
    art: (
      <>
        <path d="M4 5l29-4 3 22-30 5z" fill="#c9b88e" stroke="#f5f5f0" strokeWidth="1.500" />
        <path d="M1 18l28-12 11 26-27 10z" fill="#5d8fd0" stroke="#fff" strokeWidth="2.200" />
        <path d="M12 37l3-14q4-6 8-1l10 9z" fill="#27272b" />
        <circle cx="18" cy="18" r="4" fill="#b98462" />
        <circle cx="33" cy="35" r="6.500" fill="#c9c9cb" stroke="#777" />
        <circle cx="34" cy="26" r="6.500" fill="#1c1c1e" stroke="#ddd" strokeWidth="1.500" />
      </>
    ),
  },
];

const dockTray = [
  {
    name: "Chrome window",
    art: (
      <>
        <rect x="2" y="12" width="40" height="23" fill="#eceded" stroke="#bbb" />
        <path d="M2 12h40v4H2z" fill="#c7c9cb" />
        <path d="M6 19h20M6 22h30M6 25h26M6 28h28" stroke="#b5b5b8" />
        <circle cx="35" cy="36" r="7" fill="#f6c915" />
        <path d="M35 36l-6-3.500a7 7 0 0112.500.5z" fill="#dd3a2b" />
        <path d="M29 32.500a7 7 0 005.500 10.500L37 37z" fill="#4aae48" />
        <circle cx="35" cy="36" r="2.800" fill="#3b85d6" stroke="#fff" />
      </>
    ),
  },
  {
    name: "Trash",
    art: (
      <>
        <path d="M7 6h30l-4 34q-11 4-22 0z" fill="url(#mesh)" />
        <path d="M11 38q11 4 22 0v2q-11 4-22 0z" fill="#d5d5d8" />
        <ellipse cx="22" cy="6.500" rx="15.500" ry="4.500" fill="#1d1d1f" stroke="#d5d5d8" strokeWidth="2" />
      </>
    ),
  },
];

const DockItem = ({ item }) => (
  <li className="relative flex min-w-0 flex-1 justify-center">
    <button aria-label={item.name}>
      <svg
        width="44"
        height="44"
        viewBox="0 0 44 44"
        className="[-webkit-box-reflect:below_-2px_linear-gradient(transparent_70%,rgba(255,255,255,0.3))]"
      >
        {item.art}
      </svg>
    </button>
    {item.running && (
      <span className="absolute -bottom-2.5 h-[3px] w-3 rounded-full bg-[#e4f8ff] shadow-[0_0_6px_2px_#8fd4ff]"></span>
    )}
  </li>
);

const Dock = () => (
  <footer className="relative h-[78px] shrink-0 overflow-hidden px-[21px]">
    <div className="absolute inset-x-[21px] bottom-[3px] h-8 bg-linear-to-b from-[#77716e] to-[#d2d0cf] [clip-path:polygon(20px_0,calc(100%-20px)_0,100%_100%,0_100%)]"></div>
    <div className="absolute inset-x-[22px] bottom-0 h-[3px] border-t border-white bg-[#9b9b9b]"></div>
    <ul className="relative flex pt-[23px] pr-[15px] pl-[21px]">
      {dockApps.map((item) => (
        <DockItem key={item.name} item={item} />
      ))}
      <li className="flex w-[21px] justify-center pt-5" aria-hidden="true">
        <svg width="10" height="24" viewBox="0 0 10 24">
          <path d="M1 1l7 22" stroke="#6b6765" />
        </svg>
      </li>
      {dockTray.map((item) => (
        <DockItem key={item.name} item={item} />
      ))}
    </ul>
  </footer>
);

const App = () => {
  return (
    <div className="flex h-screen flex-col overflow-hidden bg-[#120a06] bg-linear-to-r from-[#1c1009] via-[#0b0605] to-[#160b08] font-['Noto_Sans',sans-serif]">
      <Defs />
      <MenuBar />
      <div className="flex min-h-0 flex-1 gap-0.5 pl-[18px]">
        <WidgetInspector />
        <DocumentWindow />
      </div>
      <Dock />
    </div>
  );
};

export default App;
